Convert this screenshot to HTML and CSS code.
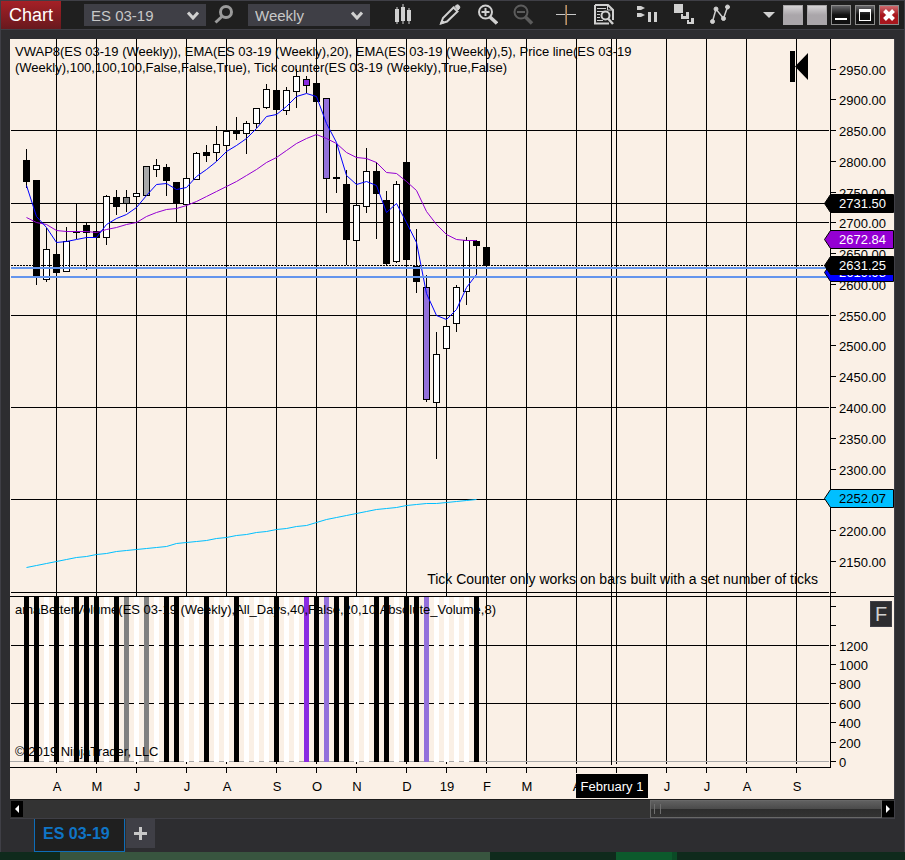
FILE: index.html
```html
<!DOCTYPE html>
<html lang="en">
<head>
    <meta charset="UTF-8">
    <meta name="viewport" content="width=device-width, initial-scale=1.0">
    <title>Chart - ES 03-19</title>
    <link rel="stylesheet" href="styles.css">
</head>
<body>
    <div class="window">
        <header class="toolbar">
            <h1 class="title">Chart</h1>
            <div class="picker instrument">
                <select aria-label="Instrument">
                    <option>ES 03-19</option>
                </select>
                <svg class="chevron" width="12" height="9" viewBox="0 0 12 9"><path d="M1 1.5L6 7L11 1.5"/></svg>
            </div>
            <button class="tool search" aria-label="Search">
                <svg width="20" height="22" viewBox="0 0 20 22" fill="none" stroke="#9a9a9a">
                    <circle cx="12" cy="8" r="5.5" stroke-width="3"/>
                    <path d="M8 12.500L1.500 18.500" stroke-width="3"/>
                </svg>
            </button>
            <div class="picker">
                <select aria-label="Interval">
                    <option>Weekly</option>
                </select>
                <svg class="chevron" width="12" height="9" viewBox="0 0 12 9"><path d="M1 1.5L6 7L11 1.5"/></svg>
            </div>
            <nav class="tools">
                <button class="tool bars" aria-label="Chart style">
                    <svg width="22" height="22" viewBox="0 0 22 22" fill="#d0d0d0">
                        <path d="M2 5h4v13H2zM3.500 3h1v17h-1zM8 3h4v14H8zM9.500 0h1v20h-1zM14 6h4v11h-4zM15.500 4h1v16h-1z"/>
                    </svg>
                </button>
                <div class="group">
                    <button class="tool" aria-label="Drawing tools">
                        <svg width="22" height="22" viewBox="0 0 22 22" fill="none" stroke="#d0d0d0">
                            <path d="M2 19.500L4 14L14.500 3.500L18.500 7.500L8 17.500Z" stroke-width="2"/>
                            <path d="M16 2.500L17.500 1Q19 .5 20 1.500Q21.500 3 20.500 4.500L19 6Z" fill="#d0d0d0"/>
                            <path d="M1.500 20L3 16L5.500 18.500Z" fill="#d0d0d0"/>
                        </svg>
                    </button>
                    <button class="tool" aria-label="Zoom in">
                        <svg width="22" height="22" viewBox="0 0 22 22" fill="none" stroke="#d0d0d0">
                            <circle cx="9.500" cy="8" r="6.500" stroke-width="2"/>
                            <path d="M9.500 4v8M5.500 8h8" stroke-width="2"/>
                            <path d="M14 13L21 19.500" stroke-width="3.500"/>
                        </svg>
                    </button>
                    <button class="tool" aria-label="Zoom out" disabled>
                        <svg width="22" height="22" viewBox="0 0 22 22" fill="none" stroke="#5c5c5c">
                            <circle cx="8" cy="8" r="6.500" stroke-width="2"/>
                            <path d="M4 8h8" stroke-width="2"/>
                            <path d="M12.500 13L19 19.500" stroke-width="3.500"/>
                        </svg>
                    </button>
                </div>
                <div class="group">
                    <button class="tool" aria-label="Crosshair">
                        <svg width="22" height="22" viewBox="0 0 22 22" fill="none">
                            <path d="M0 10.500h20" stroke="#c8c8c8"/>
                            <path d="M10.500 1v20" stroke="#c88a4c"/>
                            <path d="M9.500 1v20" stroke="#70706c"/>
                        </svg>
                    </button>
                    <button class="tool" aria-label="Data box">
                        <svg width="22" height="22" viewBox="0 0 22 22" fill="none" stroke="#d0d0d0">
                            <path d="M2 1H15L20 6V16M16 19.500H2V1" stroke-width="2"/>
                            <path d="M14.500 1V6H20" />
                            <path d="M4 4.500h9M4 7.500h6M4 10.500h3M4 13.500h3M4 16.500h6"/>
                            <circle cx="12.500" cy="11.500" r="4" stroke-width="2"/>
                            <path d="M15 14.500L20 20" stroke-width="2.500"/>
                        </svg>
                    </button>
                </div>
                <div class="group">
                    <button class="tool" aria-label="Chart trader">
                        <svg width="22" height="22" viewBox="0 0 22 22" fill="#d0d0d0">
                            <path d="M1 2h4l4 2-4 2H1zM1 9h4l4 2-4 2H1zM12 8h3v10h-3zM18 8h3v10h-3z"/>
                        </svg>
                    </button>
                    <button class="tool" aria-label="Strategies">
                        <svg width="22" height="22" viewBox="0 0 22 22" fill="#d0d0d0">
                            <path d="M1 0h9v9H1zM8 10h2v2h3V8h3v7H8zM14 16h2v2h2v-4h3v6h-7z"/>
                        </svg>
                    </button>
                    <button class="tool" aria-label="Indicators">
                        <svg width="22" height="22" viewBox="0 0 22 22" fill="#d0d0d0" stroke="#d0d0d0">
                            <path d="M2.500 17.500L6 5L13.500 14.500L17.500 3" fill="none" stroke-width="1.500"/>
                            <circle cx="2.500" cy="17.500" r="2"/>
                            <circle cx="6" cy="5" r="2"/>
                            <circle cx="13.500" cy="14.500" r="2"/>
                            <circle cx="17.500" cy="3" r="2"/>
                        </svg>
                    </button>
                </div>
            </nav>
            <div class="controls">
                <button class="more" aria-label="More">
                    <svg width="12" height="6" viewBox="0 0 12 6"><path d="M0 0H12L6 6Z" fill="#d0d0d0"/></svg>
                </button>
                <button class="ctl link" aria-label="Instrument link"></button>
                <button class="ctl link" aria-label="Interval link"></button>
                <button class="ctl" aria-label="Minimize">
                    <svg width="18" height="18" viewBox="0 0 18 18"><path d="M3 12h12v2H3z" fill="#fff"/></svg>
                </button>
                <button class="ctl" aria-label="Maximize">
                    <svg width="18" height="18" viewBox="0 0 18 18"><path d="M3 3h12v12H3zM4 6v8h10V6z" fill="#fff" fill-rule="evenodd"/></svg>
                </button>
                <button class="ctl close" aria-label="Close">
                    <svg width="18" height="18" viewBox="0 0 18 18"><path d="M4.500 4.500L13.500 13.500M13.500 4.500L4.500 13.500" stroke="#fff" stroke-width="4"/></svg>
                </button>
            </div>
        </header>

        <main class="workspace">
            <div class="chart">
                <svg id="chart" viewBox="10 39 884 760" role="img" aria-label="ES 03-19 weekly price chart">
                    <g id="grid" class="line"></g>
                    <g id="volume"></g>
                    <g id="candles"></g>
                    <g id="averages"></g>
                    <path class="last-price" d="M11 265.500H826"/>
                    <path class="level" d="M11 268H828M11 277H828"/>
                    <g class="label">
                        <text x="15" y="56">VWAP8(ES 03-19 (Weekly)), EMA(ES 03-19 (Weekly),20), EMA(ES 03-19 (Weekly),5), Price line(ES 03-19</text>
                        <text x="15" y="72">(Weekly),100,100,100,False,False,True), Tick counter(ES 03-19 (Weekly),True,False)</text>
                        <text x="15" y="614">amaBetterVolume(ES 03-19 (Weekly),All_Days,40,False,20,10,Absolute_Volume,8)</text>
                        <text x="15" y="756">© 2019 NinjaTrader, LLC</text>
                    </g>
                    <text class="notice" x="818" y="584">Tick Counter only works on bars built with a set number of ticks</text>
                    <path d="M790 51h5v31h-5zM795 66.500L808 53V80z"/>
                    <g id="axes" class="label"></g>
                    <g id="markers" class="label"></g>
                    <g class="label">
                        <path d="M576 774h72v24h-72z"/>
                        <text class="date" x="612" y="791">February 1</text>
                    </g>
                </svg>
                <button class="fixed">F</button>
            </div>
            <div class="scrollbar">
                <button class="arrow" aria-label="Scroll left"><svg width="12" height="16" viewBox="0 0 12 16"><path d="M8 4V12L4 8Z" fill="#fff"/></svg></button>
                <div class="track"><div class="thumb"></div></div>
                <button class="arrow" aria-label="Scroll right"><svg width="12" height="16" viewBox="0 0 12 16"><path d="M4 4V12L8 8Z" fill="#fff"/></svg></button>
            </div>
            <div class="tabs">
                <button class="tab">ES 03-19</button>
                <button class="add" aria-label="Add tab">
                    <svg width="13" height="13" viewBox="0 0 13 13"><path d="M5 0h3v5h5v3H8v5H5V8H0V5h5z" fill="#c8c8c8"/></svg>
                </button>
            </div>
        </main>
    </div>
    <footer class="desktop"><span class="strip"></span><span class="task"></span></footer>
    <script src="chart.js"></script>
</body>
</html>
```

FILE: styles.css
```css
* {
    margin: 0;
    padding: 0;
    box-sizing: border-box;
    font-family: "Liberation Sans", Arial, sans-serif;
}

body {
    display: flex;
    flex-direction: column;
    min-height: 100vh;
    background: #0f2a1c;
}

button {
    border: none;
    background: none;
    color: inherit;
}

svg {
    display: block;
}

.window {
    flex: 1;
    background: #2d2d30;
    border: 1px solid #3f3f46;
    border-bottom: none;
}

/* toolbar */
.toolbar {
    display: flex;
    align-items: center;
    height: 29px;
    padding-right: 5px;
    background: #1f1f1f;
    border-bottom: 1px solid #3f3f46;
}

.title {
    width: 60px;
    height: 28px;
    line-height: 28px;
    text-align: center;
    font-size: 18px;
    font-weight: normal;
    color: #fff;
    background: linear-gradient(#a52026, #68191e);
}

.picker {
    position: relative;
    width: 122px;
}

.picker.instrument {
    margin-left: 23px;
}

.picker select {
    appearance: none;
    display: block;
    width: 100%;
    height: 22px;
    padding: 0 24px 0 7px;
    border: none;
    background: #3f3f46;
    color: #c8c8c8;
    font-size: 15px;
}

.chevron {
    position: absolute;
    right: 7px;
    top: 7px;
    pointer-events: none;
    fill: none;
    stroke: #d0d0d0;
    stroke-width: 3;
}

.search {
    margin: 0 14px 0 8px;
}

.tools {
    display: flex;
    gap: 21px;
    margin-left: 23px;
}

.bars {
    margin-right: 3px;
}

.group {
    display: flex;
    gap: 15px;
}

.controls {
    display: flex;
    align-items: center;
    gap: 4px;
    margin-left: auto;
}

.more {
    margin-right: 4px;
}

.ctl {
    width: 20px;
    height: 20px;
    border: 1px solid #8c8c8c;
    background: linear-gradient(#66666a, #101010 50%);
}

.link {
    border-color: #a8a6a8;
    background: linear-gradient(#d4d2d4, #aaa6aa 50%);
}

.close {
    background: linear-gradient(#cf6a6e, #a8161d 50%);
}

/* chart */
.workspace {
    padding: 9px 9px 0;
}

.chart {
    position: relative;
    background: #faf0e6;
    border-right: 1px solid #3f3f46;
}

.chart > svg {
    width: 100%;
}

.line {
    stroke: #000;
    fill: none;
}

.label text {
    font-size: 13px;
}

.notice {
    font-size: 14px;
    text-anchor: end;
}

.month {
    text-anchor: middle;
}

.zero {
    stroke: #a9a9a9;
}

.last-price {
    stroke: #000;
    stroke-dasharray: 2 1;
}

.level {
    stroke: #6495ed;
    stroke-width: 2;
}

.average {
    fill: none;
    stroke-width: 1;
}

.date {
    fill: #fff;
    text-anchor: middle;
}

.fixed {
    position: absolute;
    top: 562px;
    right: 2px;
    width: 22px;
    height: 26px;
    border: 1px solid #3f3f46;
    background: #2d2d30;
    color: #d0d0d0;
    font-size: 20px;
}

/* scrollbar */
.scrollbar {
    display: flex;
    align-items: center;
    height: 20px;
    border: 1px solid #3f3f46;
    border-width: 1px 1px 1px 0;
    border-top-color: #1c1c1c;
    padding-left: 1px;
    background: #333;
}

.arrow {
    width: 12px;
    height: 16px;
    background: #000;
}

.track {
    display: flex;
    justify-content: flex-end;
    flex: 1;
}

.thumb {
    width: 27%;
    height: 18px;
    border: 1px solid #686868;
    background: linear-gradient(#606060, #4a4a4a 50%, #2d2d2d 50%, #333);
}

.thumb::before {
    content: "";
    display: block;
    width: 5px;
    height: 10px;
    margin: 3px;
    border: solid #6e6e6e;
    border-width: 0 1px;
}

/* tabs */
.tabs {
    display: flex;
    gap: 1px;
    padding-left: 24px;
}

.tab {
    height: 33px;
    padding: 0 14px 2px 8px;
    border: 1px solid #0e6db8;
    border-top: none;
    background: #1f1f1f;
    color: #0f75c6;
    font-size: 16px;
    font-weight: bold;
}

.add {
    display: flex;
    align-items: center;
    justify-content: center;
    width: 29px;
    height: 29px;
    background: #3f3f46;
}

.desktop {
    display: flex;
    height: 8px;
    padding-left: 60px;
}

.strip {
    width: 430px;
    background: #38553f;
}

.task {
    width: 61px;
    margin-left: 126px;
    border-right: 5px solid #0b4a26;
    background: #0c5a2c;
}
```

FILE: chart.js
```js
const BLACK = "#000";
const WHITE = "#fff";
const GREY = "#808080";
const SILVER = "#a9a9a9";
const VIOLET = "#8a2be2";
const PURPLE = "#9370db";

// one row per week: high, body top, body bottom, low, body colour, volume colour
const weeks = [
    [149, 160, 181, 188, BLACK, BLACK],
    [180, 180, 276, 285, BLACK, BLACK],
    [228, 249, 279, 282, WHITE, WHITE],
    [250, 254, 272, 276, BLACK, BLACK],
    [227, 241, 271, 271, WHITE, WHITE],
    [203, 231, 232, 239, BLACK, BLACK],
    [223, 225, 232, 270, BLACK, BLACK],
    [231, 231, 237, 241, BLACK, BLACK],
    [195, 196, 237, 245, WHITE, WHITE],
    [190, 197, 206, 215, BLACK, BLACK],
    [190, 197, 203, 212, GREY, GREY],
    [188, 193, 196, 200, WHITE, WHITE],
    [166, 166, 195, 195, SILVER, GREY],
    [159, 165, 169, 177, WHITE, WHITE],
    [164, 167, 180, 196, BLACK, BLACK],
    [182, 182, 203, 222, BLACK, BLACK],
    [178, 178, 204, 206, WHITE, WHITE],
    [152, 153, 179, 179, WHITE, WHITE],
    [145, 152, 155, 162, BLACK, BLACK],
    [126, 144, 152, 161, WHITE, WHITE],
    [126, 131, 145, 150, WHITE, WHITE],
    [117, 130, 133, 140, BLACK, BLACK],
    [121, 123, 133, 154, WHITE, WHITE],
    [108, 108, 123, 128, WHITE, WHITE],
    [84, 89, 107, 109, WHITE, WHITE],
    [90, 90, 109, 115, BLACK, BLACK],
    [87, 90, 110, 115, WHITE, WHITE],
    [69, 76, 91, 108, WHITE, WHITE],
    [76, 79, 85, 93, VIOLET, VIOLET],
    [83, 83, 101, 105, BLACK, BLACK],
    [98, 98, 178, 213, PURPLE, PURPLE],
    [144, 177, 178, 193, BLACK, BLACK],
    [170, 184, 239, 265, BLACK, BLACK],
    [200, 205, 240, 240, WHITE, WHITE],
    [148, 171, 206, 213, WHITE, WHITE],
    [162, 171, 193, 239, BLACK, BLACK],
    [191, 200, 263, 265, BLACK, BLACK],
    [181, 184, 261, 263, WHITE, WHITE],
    [162, 162, 259, 265, BLACK, BLACK],
    [229, 266, 281, 293, BLACK, BLACK],
    [275, 287, 399, 402, PURPLE, PURPLE],
    [332, 354, 402, 459, WHITE, WHITE],
    [318, 326, 348, 360, WHITE, WHITE],
    [285, 287, 323, 332, WHITE, WHITE],
    [237, 240, 291, 305, WHITE, WHITE],
    [240, 241, 245, 275, BLACK, BLACK],
    [240, 247, 265, 270, BLACK, null],
];

const ema5 = [185, 216, 227, 242, 241, 239, 237, 237, 224, 218, 214, 207, 195, 184, 183, 189, 187, 176, 169, 161, 151, 145, 138, 128, 116, 114, 106, 96, 93, 96, 123, 142, 175, 184, 181, 185, 212, 203, 222, 242, 293, 315, 319, 309, 287, 274];
const ema20 = [217, 222, 224, 230, 231, 231, 231, 232, 229, 227, 224, 222, 216, 212, 209, 208, 205, 201, 196, 191, 186, 181, 175, 169, 162, 157, 150, 143, 138, 134, 138, 143, 152, 157, 158, 162, 172, 173, 181, 190, 211, 224, 234, 239, 240, 240];
const vwap = [567, 565, 563, 561, 559, 557, 556, 554, 553, 551, 550, 549, 548, 547, 546, 543, 542, 541, 540, 538, 537, 535, 534, 532, 531, 529, 528, 526, 525, 522, 519, 517, 515, 513, 511, 509, 508, 507, 505, 504, 503, 503, 502, 501, 500, 499];

const months = [
    [56, "A"], [96, "M"], [136, "J"], [186, "J"], [226, "A"], [276, "S"],
    [316, "O"], [356, "N"], [406, "D"], [446, "19"], [486, "F"], [526, "M"],
    [576, "A"], [616, ""], [666, "J"], [706, "J"], [746, "A"], [796, "S"],
];

const markers = [
    [272, "2619.98", "#0000ff", "#fff"],
    [239, "2672.84", "#9400d3", "#fff"],
    [203, "2731.50", "#000", "#fff"],
    [265, "2631.25", "#000", "#fff"],
    [498, "2252.07", "#00bfff", "#000"],
];

const weekX = (i) => 26.5 + i * 10;

function draw(id, html) {
    document.getElementById(id).innerHTML = html;
}

// grid
let grid = "";
months.forEach(([x]) => {
    grid += `<path d="M${x + 0.5} 39V764M${x + 0.5} 768V773"/>`;
});
[130, 203, 222, 315, 407, 499, 592, 645, 703].forEach((y) => {
    grid += `<path d="M11 ${y + 0.5}H829"/>`;
});
grid += '<path class="zero" d="M10 761.5H829"/>';
grid += '<path d="M611.5 39V765M10 596.5H894M10 767.5H831M830.5 39V768"/>';
draw("grid", grid);

// candles and volume
let candles = "";
let volume = "";
weeks.forEach(([high, top, bottom, low, body, vol], i) => {
    const x = weekX(i);
    candles += `<path d="M${x} ${high}V${low}" stroke="#000"/>`;
    candles += `<rect x="${x - 3}" y="${top + 0.5}" width="6" height="${bottom - top}" fill="${body}" stroke="#000"/>`;
    if (vol) {
        volume += `<rect x="${x - 2.5}" y="597" width="5" height="165" fill="${vol}"/>`;
    }
});
draw("candles", candles);
draw("volume", volume);

// moving averages
const average = (ys, color) =>
    `<polyline class="average" stroke="${color}" points="${ys.map((y, i) => `${weekX(i)},${y + 0.5}`).join(" ")}"/>`;
draw("averages", average(vwap, "#00bfff") + average(ema20, "#9400d3") + average(ema5, "#0000ff"));

// axes
let axes = "";
for (let price = 2950; price >= 2100; price -= 50) {
    const y = Math.floor(69 + (2950 - price) * 0.6155);
    axes += `<path class="line" d="M831 ${y + 0.5}H836"/>`;
    if (price > 2100) {
        axes += `<text x="839" y="${y + 6}">${price}.00</text>`;
    }
}
for (let v = 0; v <= 1600; v += 200) {
    const y = Math.round(761 - v * 0.097);
    axes += `<path class="line" d="M831 ${y + 0.5}H836"/>`;
    if (v <= 1200) {
        axes += `<text x="839" y="${y + 6}">${v}</text>`;
    }
}
months.forEach(([x, name]) => {
    axes += `<text class="month" x="${x + 1}" y="791">${name}</text>`;
});
draw("axes", axes);

// price markers
draw("markers", markers.map(([y, price, fill, color]) => `
    <path d="M824.5 ${y + 0.5}L830.5 ${y - 8.5}H893.500V${y + 9.5}H830.500Z" fill="${fill}" stroke="#000"/>
    <text x="839" y="${y + 5}" fill="${color}">${price}</text>`).join(""));
```
